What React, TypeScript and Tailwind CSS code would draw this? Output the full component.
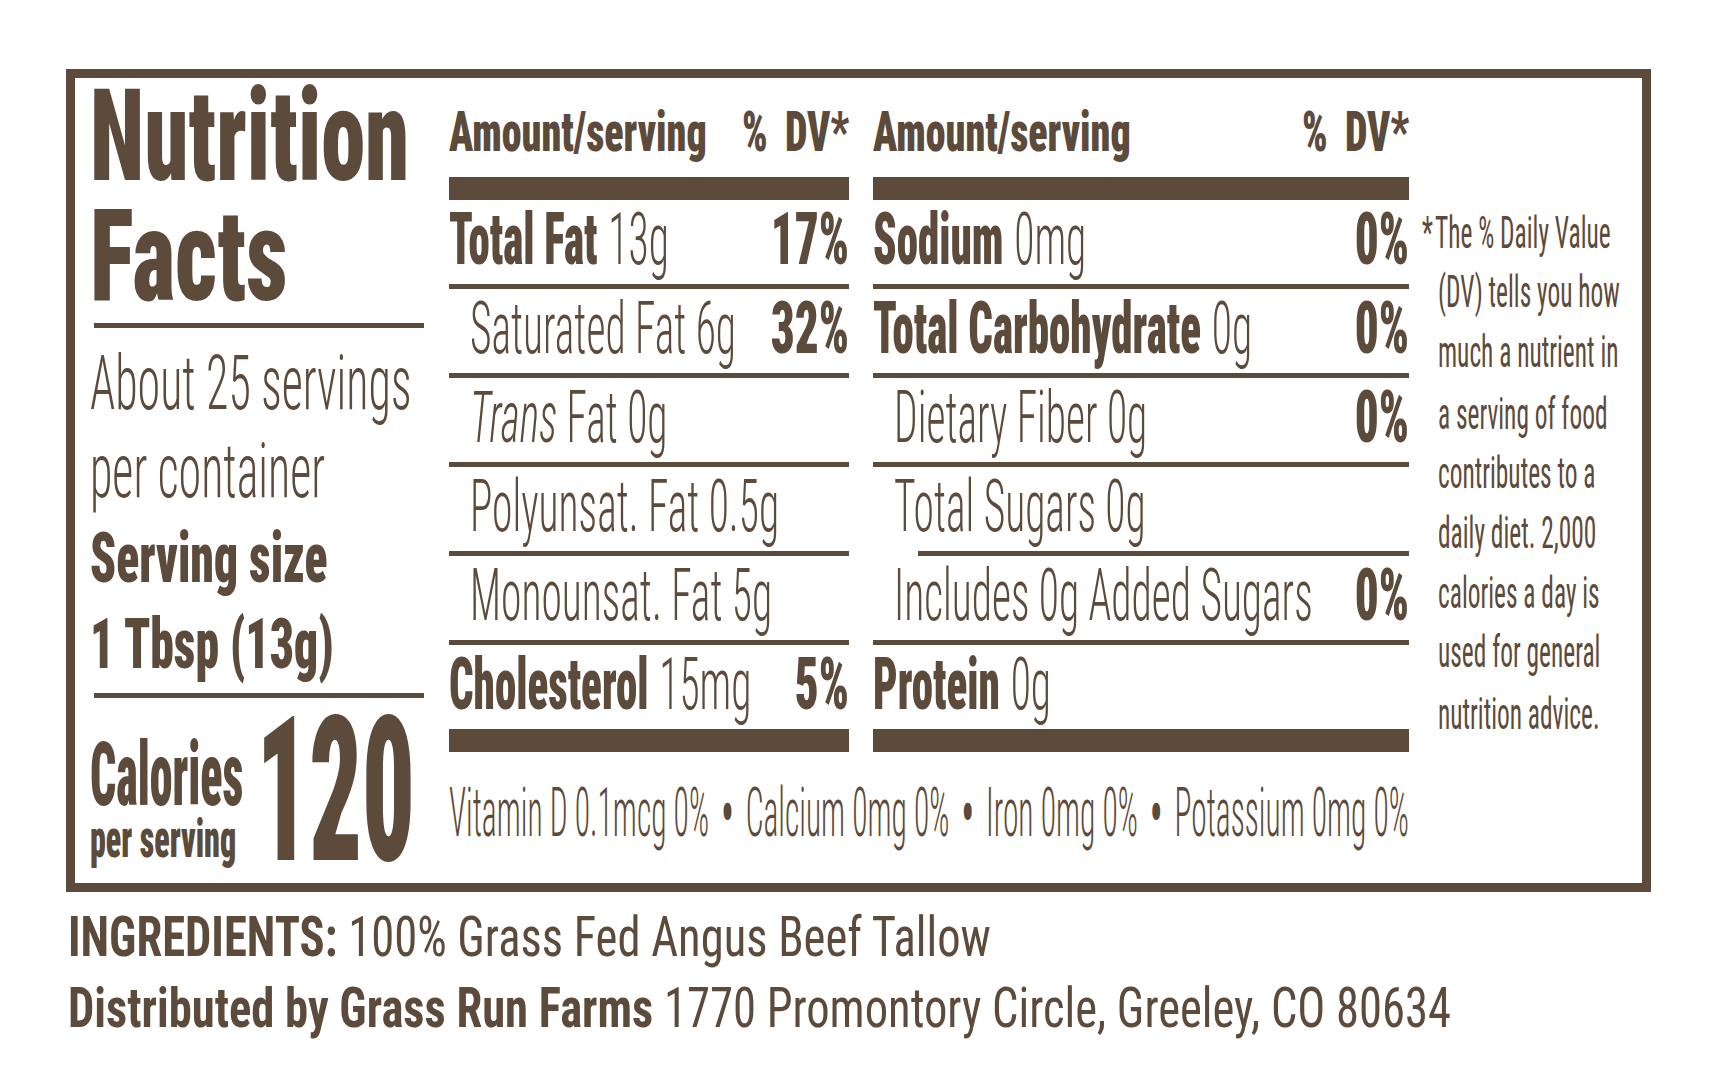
import type { ReactNode } from 'react';

// narrow face: Roboto Condensed, stretched tall to match the label's compressed type
const B = 'inline-block origin-[50%_84%] text-[43px] font-black leading-none scale-y-[1.683]';
const L = 'inline-block origin-[50%_84%] text-[41.5px] font-light leading-none scale-y-[1.744]';
const DV = 'inline-block origin-[50%_84%] text-[47px] font-black leading-none scale-y-[1.54]';

function Rule({ indent = false }: { indent?: boolean }) {
  return <div className={`h-[5px] bg-[#5c4a3b] ${indent ? 'ml-[45px]' : ''}`} />;
}

function Bar() {
  return <div className="h-[23px] bg-[#5c4a3b]" />;
}

function Row({ children, dv, indent = false }: { children: ReactNode; dv?: string; indent?: boolean }) {
  return (
    <div className={`h-[84px] pt-[24px] ${indent ? 'pl-[21px]' : ''}`}>
      <div className="flex justify-between whitespace-nowrap text-[47px] leading-none">
        <div>{children}</div>
        {dv && (
          <div>
            <span className={DV}>{dv}</span>
          </div>
        )}
      </div>
    </div>
  );
}

function Header() {
  return (
    <div className="h-[99px] pt-[40px]">
      <div className="flex justify-between whitespace-nowrap text-[40px] font-black leading-none origin-[50%_84%] scale-y-[1.386]">
        <span>Amount/serving</span>
        <span className="[word-spacing:8px]">% DV*</span>
      </div>
    </div>
  );
}

function Left() {
  return (
    <div className="flex w-[359px] flex-col whitespace-nowrap leading-none">
      <div className="mt-[27px] origin-[50%_84%] scale-y-[1.433] text-[89px] font-black">Nutrition</div>
      <div className="mt-[28.5px] origin-[50%_84%] scale-y-[1.392] text-[92px] font-black">Facts</div>
      <div className="mt-[8.5px] ml-[4px] h-[5px] w-[330px] bg-[#5c4a3b]" />
      <div className="mt-[42px] origin-[50%_84%] scale-y-[1.67] text-[46px] font-light">About 25 servings</div>
      <div className="mt-[42px] origin-[50%_84%] scale-y-[1.67] text-[46px] font-light">per container</div>
      <div className="mt-[38.5px] origin-[50%_84%] scale-y-[1.488] text-[47.6px] font-black">Serving size</div>
      <div className="mt-[38.5px] origin-[50%_84%] scale-y-[1.488] text-[47.6px] font-black">1 Tbsp (13g)</div>
      <div className="mt-[16.5px] ml-[4px] h-[5px] w-[330px] bg-[#5c4a3b]" />
      <div className="flex w-[325px] justify-between">
        <div className="flex flex-col">
          <div className="mt-[68px] origin-[50%_84%] scale-y-[1.937] text-[46px] font-black">Calories</div>
          <div className="mt-[18.5px] origin-[50%_84%] scale-y-[1.656] text-[32px] font-black">per serving</div>
        </div>
        <div className="mt-[75px] origin-[50%_84%] scale-y-[1.949] text-[103.5px] font-black">120</div>
      </div>
    </div>
  );
}

const footnote = [
  'The % Daily Value',
  '(DV) tells you how',
  'much a nutrient in',
  'a serving of food',
  'contributes to a',
  'daily diet. 2,000',
  'calories a day is',
  'used for general',
  'nutrition advice.',
];

export default function App() {
  return (
    <div className="h-[1092px] w-[1714px] overflow-hidden bg-white pl-[66px] pt-[69px] text-[#5c4a3b] [font-family:'Roboto_Condensed',Roboto,sans-serif] [font-stretch:75%]">
      {/* Label */}
      <div className="flex h-[823px] w-[1585px] border-[9px] border-[#5c4a3b] pl-[15px]">
        <Left />

        <div className="flex w-[960px] flex-col">
          <div className="flex gap-[24px]">
            {/* Column 1 */}
            <div className="w-[400px]">
              <Header />
              <Bar />
              <Row dv="17%">
                <span className={B}>Total Fat</span> <span className={L}>13g</span>
              </Row>
              <Rule />
              <Row dv="32%" indent>
                <span className={L}>Saturated Fat 6g</span>
              </Row>
              <Rule />
              <Row indent>
                <span className={L}>
                  <i>Trans</i> Fat 0g
                </span>
              </Row>
              <Rule />
              <Row indent>
                <span className={L}>Polyunsat. Fat 0.5g</span>
              </Row>
              <Rule />
              <Row indent>
                <span className={L}>Monounsat. Fat 5g</span>
              </Row>
              <Rule />
              <Row dv="5%">
                <span className={B}>Cholesterol</span> <span className={L}>15mg</span>
              </Row>
              <Bar />
            </div>

            {/* Column 2 */}
            <div className="w-[536px]">
              <Header />
              <Bar />
              <Row dv="0%">
                <span className={B}>Sodium</span> <span className={L}>0mg</span>
              </Row>
              <Rule />
              <Row dv="0%">
                <span className={B}>Total Carbohydrate</span> <span className={L}>0g</span>
              </Row>
              <Rule />
              <Row dv="0%" indent>
                <span className={L}>Dietary Fiber 0g</span>
              </Row>
              <Rule />
              <Row indent>
                <span className={L}>Total Sugars 0g</span>
              </Row>
              <Rule indent />
              <Row dv="0%" indent>
                <span className={L}>Includes 0g Added Sugars</span>
              </Row>
              <Rule />
              <Row>
                <span className={B}>Protein</span> <span className={L}>0g</span>
              </Row>
              <Bar />
            </div>
          </div>

          {/* Vitamins */}
          <div className="mt-[58.5px] flex justify-between whitespace-nowrap text-[31.5px] font-light leading-none origin-[50%_84%] scale-y-[2.19]">
            <span>Vitamin D 0.1mcg 0%</span>
            <span className="font-black">•</span>
            <span>Calcium 0mg 0%</span>
            <span className="font-black">•</span>
            <span>Iron 0mg 0%</span>
            <span className="font-black">•</span>
            <span>Potassium 0mg 0%</span>
          </div>
        </div>

        {/* Footnote */}
        <div className="ml-[13px] mt-[124px] origin-top scale-y-[1.756] whitespace-nowrap pl-[16px] text-[25.4px] leading-[34.2px]">
          {footnote.map((line, i) => (
            <div key={line} className={i === 0 ? '-ml-[16px]' : ''}>
              {i === 0 && <span className="inline-block w-[13px]">*</span>}
              {line}
            </div>
          ))}
        </div>
      </div>

      {/* Ingredients */}
      <div className="ml-[2px] mt-[25px] origin-[50%_84%] scale-y-[1.198] whitespace-nowrap text-[46.6px] leading-none">
        <span className="font-bold">INGREDIENTS:</span> 100% Grass Fed Angus Beef Tallow
      </div>
      <div className="ml-[2px] mt-[24.5px] origin-[50%_84%] scale-y-[1.198] whitespace-nowrap text-[46.6px] leading-none">
        <span className="font-bold">Distributed by Grass Run Farms</span> 1770 Promontory Circle, Greeley, CO 80634
      </div>
    </div>
  );
}
